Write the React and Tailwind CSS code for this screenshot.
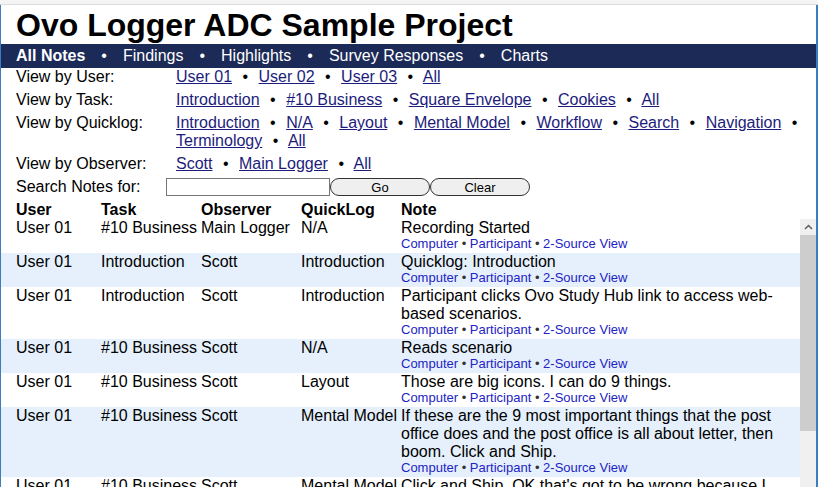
import React from 'react';

const navItems = ['All Notes', 'Findings', 'Highlights', 'Survey Responses', 'Charts'];

const filters = [
  { label: 'View by User:', links: ['User 01', 'User 02', 'User 03', 'All'] },
  { label: 'View by Task:', links: ['Introduction', '#10 Business', 'Square Envelope', 'Cookies', 'All'] },
  {
    label: 'View by Quicklog:',
    links: ['Introduction', 'N/A', 'Layout', 'Mental Model', 'Workflow', 'Search', 'Navigation', 'Terminology', 'All'],
  },
  { label: 'View by Observer:', links: ['Scott', 'Main Logger', 'All'] },
];

const notes = [
  { user: 'User 01', task: '#10 Business', observer: 'Main Logger', quicklog: 'N/A', note: 'Recording Started' },
  { user: 'User 01', task: 'Introduction', observer: 'Scott', quicklog: 'Introduction', note: 'Quicklog: Introduction' },
  {
    user: 'User 01',
    task: 'Introduction',
    observer: 'Scott',
    quicklog: 'Introduction',
    note: 'Participant clicks Ovo Study Hub link to access web-based scenarios.',
  },
  { user: 'User 01', task: '#10 Business', observer: 'Scott', quicklog: 'N/A', note: 'Reads scenario' },
  { user: 'User 01', task: '#10 Business', observer: 'Scott', quicklog: 'Layout', note: 'Those are big icons. I can do 9 things.' },
  {
    user: 'User 01',
    task: '#10 Business',
    observer: 'Scott',
    quicklog: 'Mental Model',
    note: 'If these are the 9 most important things that the post office does and the post office is all about letter, then boom. Click and Ship.',
  },
  {
    user: 'User 01',
    task: '#10 Business',
    observer: 'Scott',
    quicklog: 'Mental Model',
    note: "Click and Ship. OK that's got to be wrong because I don't want to ship a package, I want to mail a letter.",
  },
];

// non-breaking space before the bullet so it stays at the end of a wrapped line
const Bullet = () => (
  <>
    {'\u00a0'}
    <span className="mx-[6px]">•</span>{' '}
  </>
);

const FilterRow = ({ label, links }) => (
  <div className="flex">
    <div className="w-[160px] shrink-0">{label}</div>
    <div className="flex-1 pr-[8px]">
      {links.map((l, i) => (
        <React.Fragment key={l + i}>
          <a href="#" className="text-[#1c1c7c] underline">
            {l}
          </a>
          {i < links.length - 1 && <Bullet />}
        </React.Fragment>
      ))}
    </div>
  </div>
);

const NoteRow = ({ row, shaded }) => (
  <div className={`grid grid-cols-[85px_100px_100px_100px_1fr] pl-[15px] pb-[2px] ${shaded ? 'bg-[#e5f0fc]' : 'bg-white'}`}>
    <div>{row.user}</div>
    <div>{row.task}</div>
    <div>{row.observer}</div>
    <div>{row.quicklog}</div>
    <div className="pr-[3px]">
      <div>{row.note}</div>
      <div className="text-[13px] leading-[14px] text-[#333]">
        <a href="#" className="text-[#2323c4]">Computer</a> • <a href="#" className="text-[#2323c4]">Participant</a> •{' '}
        <a href="#" className="text-[#2323c4]">2-Source View</a>
      </div>
    </div>
  </div>
);

export default function App() {
  return (
    <div className="w-[818px] h-[487px] overflow-hidden flex flex-col bg-white text-black text-[16px] leading-[18px] font-['Liberation_Sans',Arial,sans-serif]">
      {/* window top edge */}
      <div className="h-[5px] shrink-0 bg-[#f4f4f4] border-b border-[#dcdcdc]" />

      <div className="flex-1 min-h-0 flex flex-col border-l border-l-[#3b7dc0] border-r-2 border-r-[#3b7dc0]">
        {/* Title */}
        <h1 className="h-[39px] shrink-0 pl-[15px] pt-[1px] text-[32px] leading-[38px] font-bold">Ovo Logger ADC Sample Project</h1>

        {/* Nav */}
        <div className="h-[24px] shrink-0 bg-[#1c2a57] text-white leading-[24px] pl-[15px] flex">
          {navItems.map((item, i) => (
            <React.Fragment key={item}>
              <span className={i === 0 ? 'font-bold' : ''}>{item}</span>
              {i < navItems.length - 1 && <span className="mx-[16px]">•</span>}
            </React.Fragment>
          ))}
        </div>

        {/* Filters */}
        <div className="shrink-0 flex flex-col gap-[5px] pl-[15px]">
          {filters.map((f) => (
            <FilterRow key={f.label} {...f} />
          ))}
          <div className="flex items-center h-[18px]">
            <div className="w-[150px] shrink-0">Search Notes for:</div>
            <input type="text" className="w-[164px] h-[18px] border border-[#767676] bg-white outline-none" />
            <button className="w-[100px] h-[18px] rounded-full border border-[#333] bg-[#efefef] text-[13px] leading-none">Go</button>
            <button className="w-[100px] h-[18px] rounded-full border border-[#333] bg-[#efefef] text-[13px] leading-none">Clear</button>
          </div>

          {/* Table header */}
          <div className="grid grid-cols-[85px_100px_100px_100px_1fr] font-bold">
            <div>User</div>
            <div>Task</div>
            <div>Observer</div>
            <div>QuickLog</div>
            <div>Note</div>
          </div>
        </div>

        {/* Notes list with scrollbar */}
        <div className="flex-1 min-h-0 flex">
          <div className="flex-1 min-w-0 overflow-hidden">
            {notes.map((row, i) => (
              <NoteRow key={i} row={row} shaded={i % 2 === 1} />
            ))}
          </div>
          <div className="w-[16px] shrink-0 flex flex-col bg-[#f0f0f0]">
            <div className="h-[16px] flex items-center justify-center">
              <svg width="9" height="6" viewBox="0 0 9 6" fill="none">
                <polyline points="1,5 4.5,1.5 8,5" stroke="#606060" strokeWidth="1.5" />
              </svg>
            </div>
            <div className="h-[196px] bg-[#cdcdcd]" />
            <div className="flex-1" />
          </div>
        </div>
      </div>
    </div>
  );
}
